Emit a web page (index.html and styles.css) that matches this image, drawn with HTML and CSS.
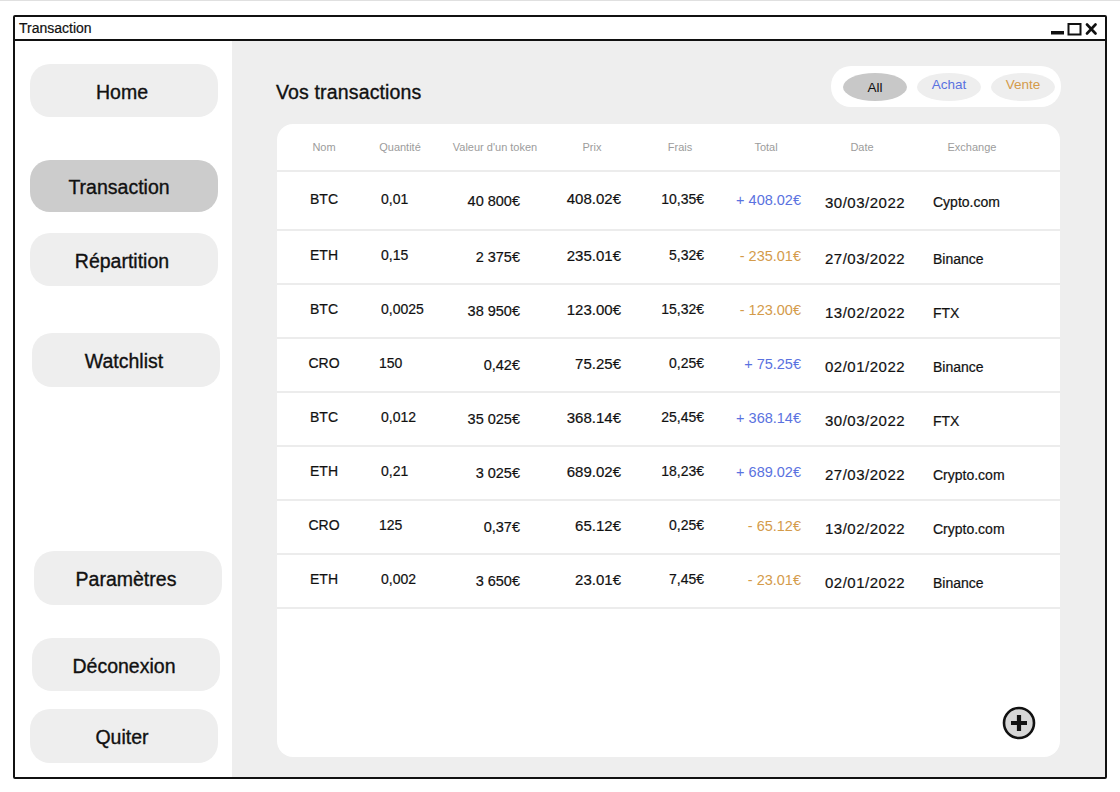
FILE: index.html
```html
<!DOCTYPE html>
<html lang="fr">
<head>
<meta charset="utf-8">
<title>Transaction</title>
<link rel="stylesheet" href="styles.css">
</head>
<body>
<div class="window">
  <div class="titlebar">
    <span class="title">Transaction</span>
    <svg class="controls" width="46" height="14" viewBox="0 0 46 14">
      <rect x="0" y="9" width="13" height="3.5" fill="#111"/>
      <rect x="17.5" y="2" width="12" height="10.5" fill="none" stroke="#111" stroke-width="2"/>
      <path d="M36 2.5 L44.5 11.5 M44.5 2.5 L36 11.5" stroke="#111" stroke-width="2.6" stroke-linecap="round"/>
    </svg>
  </div>
  <div class="content">
    <nav class="sidebar">
      <div class="nav-btn nb-home">Home</div>
      <div class="nav-btn nb-active nb-trans">Transaction</div>
      <div class="nav-btn nb-rep">Répartition</div>
      <div class="nav-btn nb-watch">Watchlist</div>
      <div class="nav-btn nb-param">Paramètres</div>
      <div class="nav-btn nb-deco">Déconexion</div>
      <div class="nav-btn nb-quit">Quiter</div>
    </nav>
    <main class="main">
      <div class="main-header">
        <h1 class="page-title">Vos transactions</h1>
        <div class="filters">
          <span class="pill pill-all">All</span>
          <span class="pill pill-achat">Achat</span>
          <span class="pill pill-vente">Vente</span>
        </div>
      </div>
      <section class="card">
        <div class="table">
          <div class="row head">
            <div class="cell c1">Nom</div>
            <div class="cell c2">Quantité</div>
            <div class="cell c3">Valeur d'un token</div>
            <div class="cell c4">Prix</div>
            <div class="cell c5">Frais</div>
            <div class="cell c6">Total</div>
            <div class="cell c7">Date</div>
            <div class="cell c8">Exchange</div>
          </div>
          <div class="row data first">
            <div class="cell c1">BTC</div>
            <div class="cell c2">0,01</div>
            <div class="cell c3">40 800€</div>
            <div class="cell c4">408.02€</div>
            <div class="cell c5">10,35€</div>
            <div class="cell c6 plus">+ 408.02€</div>
            <div class="cell c7">30/03/2022</div>
            <div class="cell c8">Cypto.com</div>
          </div>
          <div class="row data">
            <div class="cell c1">ETH</div>
            <div class="cell c2">0,15</div>
            <div class="cell c3">2 375€</div>
            <div class="cell c4">235.01€</div>
            <div class="cell c5">5,32€</div>
            <div class="cell c6 minus">- 235.01€</div>
            <div class="cell c7">27/03/2022</div>
            <div class="cell c8">Binance</div>
          </div>
          <div class="row data">
            <div class="cell c1">BTC</div>
            <div class="cell c2">0,0025</div>
            <div class="cell c3">38 950€</div>
            <div class="cell c4">123.00€</div>
            <div class="cell c5">15,32€</div>
            <div class="cell c6 minus">- 123.00€</div>
            <div class="cell c7">13/02/2022</div>
            <div class="cell c8">FTX</div>
          </div>
          <div class="row data">
            <div class="cell c1">CRO</div>
            <div class="cell c2 int">150</div>
            <div class="cell c3">0,42€</div>
            <div class="cell c4">75.25€</div>
            <div class="cell c5">0,25€</div>
            <div class="cell c6 plus">+ 75.25€</div>
            <div class="cell c7">02/01/2022</div>
            <div class="cell c8">Binance</div>
          </div>
          <div class="row data">
            <div class="cell c1">BTC</div>
            <div class="cell c2">0,012</div>
            <div class="cell c3">35 025€</div>
            <div class="cell c4">368.14€</div>
            <div class="cell c5">25,45€</div>
            <div class="cell c6 plus">+ 368.14€</div>
            <div class="cell c7">30/03/2022</div>
            <div class="cell c8">FTX</div>
          </div>
          <div class="row data">
            <div class="cell c1">ETH</div>
            <div class="cell c2">0,21</div>
            <div class="cell c3">3 025€</div>
            <div class="cell c4">689.02€</div>
            <div class="cell c5">18,23€</div>
            <div class="cell c6 plus">+ 689.02€</div>
            <div class="cell c7">27/03/2022</div>
            <div class="cell c8">Crypto.com</div>
          </div>
          <div class="row data">
            <div class="cell c1">CRO</div>
            <div class="cell c2 int">125</div>
            <div class="cell c3">0,37€</div>
            <div class="cell c4">65.12€</div>
            <div class="cell c5">0,25€</div>
            <div class="cell c6 minus">- 65.12€</div>
            <div class="cell c7">13/02/2022</div>
            <div class="cell c8">Crypto.com</div>
          </div>
          <div class="row data last">
            <div class="cell c1">ETH</div>
            <div class="cell c2">0,002</div>
            <div class="cell c3">3 650€</div>
            <div class="cell c4">23.01€</div>
            <div class="cell c5">7,45€</div>
            <div class="cell c6 minus">- 23.01€</div>
            <div class="cell c7">02/01/2022</div>
            <div class="cell c8">Binance</div>
          </div>
        </div>
        <div class="card-footer">
          <svg class="add-btn" width="34" height="34" viewBox="0 0 34 34">
            <circle cx="17" cy="17" r="15" fill="#d6d6d6" stroke="#111" stroke-width="2.6"/>
            <path d="M17 9 V25 M9 17 H25" stroke="#111" stroke-width="4.2"/>
          </svg>
        </div>
      </section>
    </main>
  </div>
</div>
</body>
</html>
```
FILE: styles.css
```css
html, body {
  margin: 0;
  padding: 0;
  background: #ffffff;
}
body {
  border-top: 1px solid #e0e0e0;
  font-family: "Liberation Sans", Arial, sans-serif;
  color: #111111;
}
.window {
  margin: 14px 0 0 13px;
  width: 1094px;
  height: 764px;
  box-sizing: border-box;
  border: 2px solid #111111;
  border-radius: 2px;
  display: flex;
  flex-direction: column;
}
.titlebar {
  height: 22px;
  border-bottom: 2px solid #111111;
  display: flex;
  align-items: center;
  padding: 0 8px 0 4px;
  background: #ffffff;
}
.title {
  font-size: 14px;
  line-height: 22px;
  -webkit-text-stroke: 0.2px #111111;
}
.controls {
  margin-left: auto;
  margin-top: 1px;
}
.content {
  flex: 1;
  display: flex;
  min-height: 0;
}
.sidebar {
  width: 217px;
  flex: none;
  background: #ffffff;
  display: flex;
  flex-direction: column;
}
.nav-btn {
  width: 188px;
  height: 53px;
  margin-left: 15px;
  border-radius: 20px;
  background: #eeeeee;
  display: flex;
  align-items: center;
  justify-content: center;
  font-size: 19.5px;
  color: #111111;
  -webkit-text-stroke: 0.35px #111111;
  padding-top: 3px;
  padding-right: 4px;
  box-sizing: border-box;
  flex: none;
}
.nb-active { background: #cccccc; }
.nb-home { margin-top: 23px; }
.nb-trans { margin-top: 43px; height: 52px; padding-right: 10px; }
.nb-rep { margin-top: 21px; }
.nb-watch { margin-top: 47px; margin-left: 17px; height: 54px; }
.nb-param { margin-top: 164px; margin-left: 19px; height: 54px; }
.nb-deco { margin-top: 33px; margin-left: 17px; }
.nb-quit { margin-top: 18px; height: 54px; }

.main {
  flex: 1;
  background: #eeeeee;
  padding: 25px 44px 20px 44px;
  display: flex;
  flex-direction: column;
  min-width: 0;
}
.main-header {
  height: 41px;
  display: flex;
  justify-content: space-between;
  flex: none;
}
.page-title {
  margin: 15px 0 0 0;
  font-size: 19.5px;
  line-height: 22px;
  font-weight: 400;
  color: #111111;
  -webkit-text-stroke: 0.35px #111111;
  letter-spacing: 0.15px;
}
.filters {
  width: 230px;
  height: 41px;
  box-sizing: border-box;
  background: #ffffff;
  border-radius: 20px;
  display: flex;
  align-items: center;
  gap: 10px;
  padding-left: 12px;
}
.pill {
  width: 64px;
  height: 28px;
  border-radius: 50%;
  background: #eeeeee;
  display: flex;
  align-items: center;
  justify-content: center;
  font-size: 13.5px;
  padding-bottom: 1px;
  box-sizing: border-box;
}
.pill-all { background: #c8c8c8; color: #111111; padding-top: 2px; }
.pill-achat { color: #5a72e0; padding-bottom: 4px; }
.pill-vente { color: #d49b4a; padding-bottom: 4px; }

.card {
  margin: 17px 1px 0 1px;
  flex: 1;
  background: #ffffff;
  border-radius: 16px;
  display: flex;
  flex-direction: column;
}
.table {
  display: flex;
  flex-direction: column;
}
.row {
  display: grid;
  grid-template-columns: 94px 58px 132px 62px 108px 70px 122px 98px 1fr;
  align-items: center;
}
.row.head {
  height: 46px;
}
.row.head .cell {
  font-size: 11px;
  color: #9c9c9c;
  text-align: center;
  white-space: nowrap;
}
.row.head .c5 { padding-left: 6px; }
.row.data {
  height: 52px;
  border-top: 2px solid #ececec;
}
.row.data.first { height: 57px; }
.row.data.last { border-bottom: 2px solid #ececec; }
.row.data .cell {
  font-size: 15px;
  white-space: nowrap;
  color: #111111;
  -webkit-text-stroke: 0.2px currentColor;
}
.row.data .c1 { text-align: center; font-size: 14px; padding-bottom: 4px; }
.row.data .c2 { padding-left: 10px; font-size: 14px; padding-bottom: 4px; }
.row.data .c2.int { padding-left: 8px; }
.row.data .c3 { text-align: right; padding-right: 41px; font-size: 14.5px; }
.row.data .c4 { text-align: right; padding-right: 2px; padding-bottom: 4px; }
.row.data .c5 { text-align: right; padding-right: 27px; font-size: 14px; padding-bottom: 4px; }
.row.data .c6 { text-align: right; padding-right: 0; font-size: 14.5px; padding-bottom: 2px; }
.row.data .c7 { padding-left: 24px; letter-spacing: 0.5px; padding-top: 3px; }
.row.data .c8 { padding-left: 10px; font-size: 14px; padding-top: 3px; }
.row.data .plus { color: #5a72e0; -webkit-text-stroke: 0; }
.row.data .minus { color: #d49b4a; -webkit-text-stroke: 0; }

.card-footer {
  flex: 1;
  display: flex;
  justify-content: flex-end;
  align-items: flex-end;
  padding: 0 24px 17px 0;
}
.add-btn { display: block; }
```
